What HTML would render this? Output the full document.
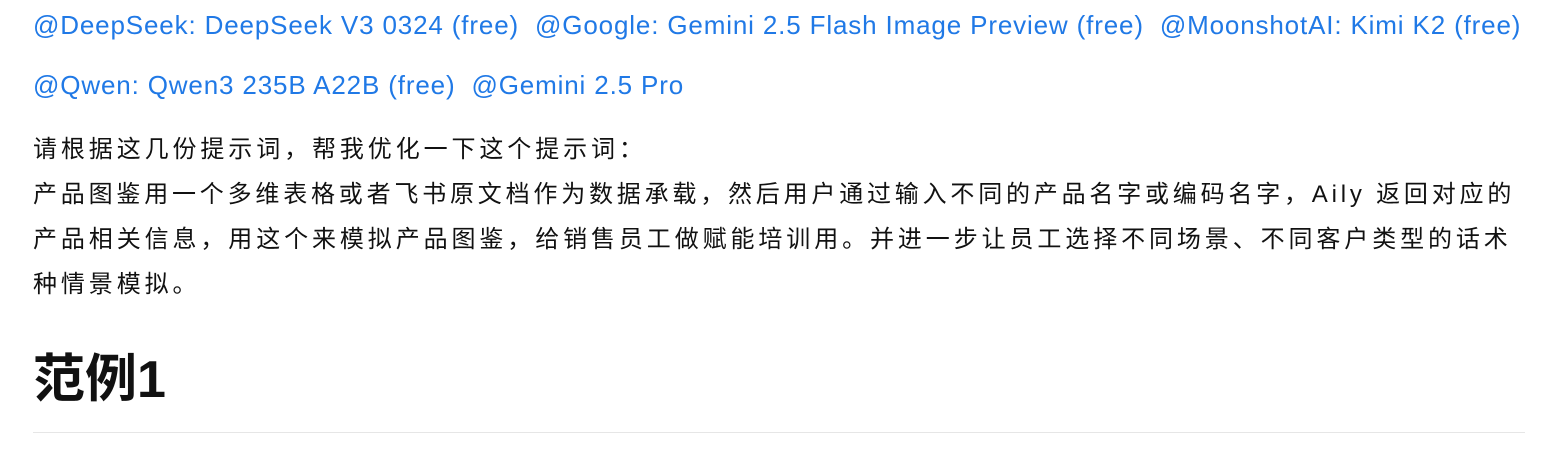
<!DOCTYPE html>
<html><head><meta charset="utf-8"><style>
body{margin:0;background:#fff;width:1544px;height:468px;overflow:hidden;font-family:"Liberation Sans","Noto Sans CJK SC",sans-serif;}
.links{position:absolute;left:33px;font-size:26px;letter-spacing:0.85px;color:#2079e6;white-space:nowrap}
.links span{margin-right:16px}
.l{position:absolute;left:33px;font-size:24px;line-height:45px;color:#111;white-space:nowrap}
h1{position:absolute;left:33px;top:345px;margin:0;font-size:52px;font-weight:bold;color:#111;line-height:70px}
.hr{position:absolute;left:33px;top:432px;width:1492px;height:1px;background:#e6e6e6}
</style></head><body>
<div class="links" style="top:10px"><span>@DeepSeek: DeepSeek V3 0324 (free)</span><span>@Google: Gemini 2.5 Flash Image Preview (free)</span><span>@MoonshotAI: Kimi K2 (free)</span></div>
<div class="links" style="top:70px"><span>@Qwen: Qwen3 235B A22B (free)</span><span>@Gemini 2.5 Pro</span></div>
<div class="l" style="top:127px;letter-spacing:3.9px">请根据这几份提示词，帮我优化一下这个提示词：</div>
<div class="l" style="top:172px;letter-spacing:3.8px">产品图鉴用一个多维表格或者飞书原文档作为数据承载，然后用户通过输入不同的产品名字或编码名字，Aily 返回对应的</div>
<div class="l" style="top:217px;letter-spacing:3.9px">产品相关信息，用这个来模拟产品图鉴，给销售员工做赋能培训用。并进一步让员工选择不同场景、不同客户类型的话术</div>
<div class="l" style="top:262px;letter-spacing:3.9px">种情景模拟。</div>
<h1>范例1</h1>
<div class="hr"></div>
</body></html>
